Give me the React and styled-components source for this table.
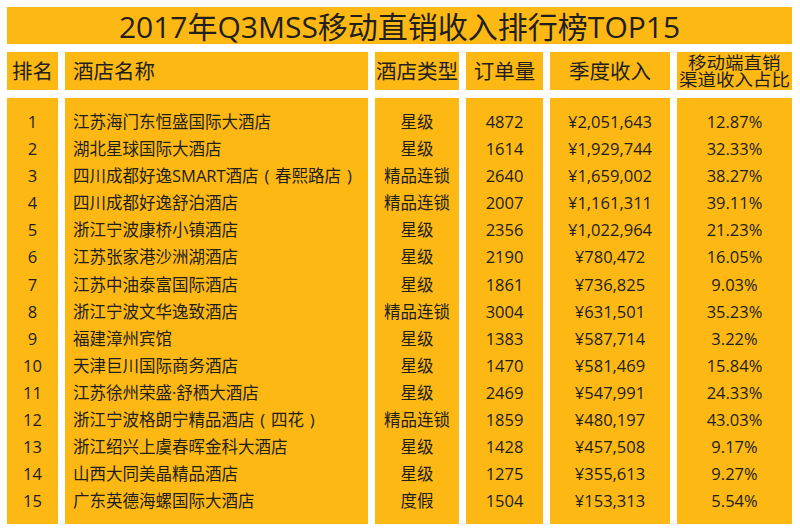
import React from "react";
import styled, { createGlobalStyle } from "styled-components";

const Global = createGlobalStyle`
  html, body { margin: 0; padding: 0; background: #ffffff; }
  body { font-family: "Open Sans", "Noto Sans CJK SC", sans-serif; color: #221e1a; }
`;

const ORANGE = "#fdb813";

const Page = styled.div`
  width: 800px;
  height: 531px;
  box-sizing: border-box;
  padding: 7px 8px 7px 7px;
  display: flex;
  flex-direction: column;
  gap: 8px;
  background: #fff;
`;

const Title = styled.div`
  height: 37px;
  background: ${ORANGE};
  display: flex;
  align-items: center;
  justify-content: center;
  font-size: 30px;
  line-height: 1;
  padding-top: 2px;
  box-sizing: border-box;
  white-space: nowrap;
`;

const Grid = styled.div`
  display: grid;
  grid-template-columns: 51px 303px 84px 77px 120px 115px;
  grid-template-rows: 38px 426px;
  column-gap: 7px;
  row-gap: 8px;
`;

const Head = styled.div`
  background: ${ORANGE};
  display: flex;
  flex-direction: column;
  align-items: ${(p) => (p.$left ? "flex-start" : "center")};
  justify-content: center;
  padding-left: ${(p) => (p.$left ? "8px" : "0")};
  font-size: 20.5px;
  line-height: 1;
  white-space: nowrap;
`;

const HeadLine = styled.div`
  font-size: 16.5px;
  line-height: 17px;
  text-align: center;
  transform: scaleX(1.12);
`;

const Col = styled.div`
  background: ${ORANGE};
  box-sizing: border-box;
  padding-top: 10px;
  display: flex;
  flex-direction: column;
  align-items: ${(p) => (p.$left ? "flex-start" : "center")};
  padding-left: ${(p) => (p.$left ? "8px" : "0")};
  overflow: hidden;
`;

const Cell = styled.div`
  height: 27.1px;
  line-height: 27.1px;
  font-size: 16.5px;
  white-space: nowrap;
`;

const Paren = styled.span`
  display: inline-block;
  width: 1em;
  text-align: center;
`;

const withParens = (text) => {
  if (typeof text !== "string" || !text.includes("（")) return text;
  const parts = text.split(/([（）])/);
  return parts.map((p, i) =>
    p === "（" ? <Paren key={i}>(</Paren> : p === "）" ? <Paren key={i}>)</Paren> : p
  );
};

const rows = [
  ["1", "江苏海门东恒盛国际大酒店", "星级", "4872", "¥2,051,643", "12.87%"],
  ["2", "湖北星球国际大酒店", "星级", "1614", "¥1,929,744", "32.33%"],
  ["3", "四川成都好逸SMART酒店（春熙路店）", "精品连锁", "2640", "¥1,659,002", "38.27%"],
  ["4", "四川成都好逸舒泊酒店", "精品连锁", "2007", "¥1,161,311", "39.11%"],
  ["5", "浙江宁波康桥小镇酒店", "星级", "2356", "¥1,022,964", "21.23%"],
  ["6", "江苏张家港沙洲湖酒店", "星级", "2190", "¥780,472", "16.05%"],
  ["7", "江苏中油泰富国际酒店", "星级", "1861", "¥736,825", "9.03%"],
  ["8", "浙江宁波文华逸致酒店", "精品连锁", "3004", "¥631,501", "35.23%"],
  ["9", "福建漳州宾馆", "星级", "1383", "¥587,714", "3.22%"],
  ["10", "天津巨川国际商务酒店", "星级", "1470", "¥581,469", "15.84%"],
  ["11", "江苏徐州荣盛·舒栖大酒店", "星级", "2469", "¥547,991", "24.33%"],
  ["12", "浙江宁波格朗宁精品酒店（四花）", "精品连锁", "1859", "¥480,197", "43.03%"],
  ["13", "浙江绍兴上虞春晖金科大酒店", "星级", "1428", "¥457,508", "9.17%"],
  ["14", "山西大同美晶精品酒店", "星级", "1275", "¥355,613", "9.27%"],
  ["15", "广东英德海螺国际大酒店", "度假", "1504", "¥153,313", "5.54%"],
];

export default function App() {
  return (
    <>
      <Global />
      <Page>
        <Title>2017年Q3MSS移动直销收入排行榜TOP15</Title>
        <Grid>
          <Head>排名</Head>
          <Head $left>酒店名称</Head>
          <Head>酒店类型</Head>
          <Head>订单量</Head>
          <Head>季度收入</Head>
          <Head>
            <HeadLine>移动端直销</HeadLine>
            <HeadLine>渠道收入占比</HeadLine>
          </Head>
          {[0, 1, 2, 3, 4, 5].map((c) => (
            <Col key={c} $left={c === 1}>
              {rows.map((r) => (
                <Cell key={r[0]}>{withParens(r[c])}</Cell>
              ))}
            </Col>
          ))}
        </Grid>
      </Page>
    </>
  );
}
